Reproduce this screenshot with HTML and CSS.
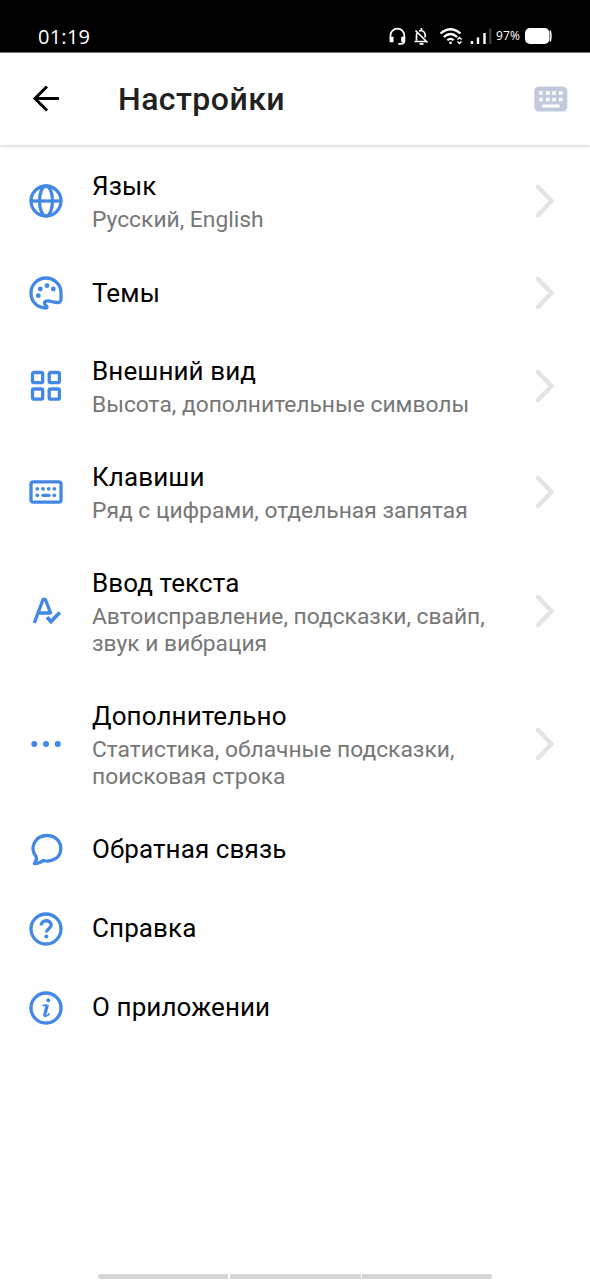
FILE: index.html
```html
<!DOCTYPE html>
<html lang="ru">
<head>
<meta charset="utf-8">
<title>Настройки</title>
<link rel="stylesheet" href="styles.css">
</head>
<body>
<svg class="defs" width="0" height="0"><symbol id="chevron" viewBox="0 0 20 34"><path d="M3 3 16.500 17 3 31" fill="none" stroke="currentColor" stroke-width="4.600" stroke-linecap="round" stroke-linejoin="round"/></symbol></svg>
<div class="screen">
  <div class="statusbar">
    <span class="clock">01:19</span>
    <svg class="status-icons" width="106" height="24" viewBox="0 0 106 24" fill="none" stroke="#fff" stroke-width="1.7">
      <path d="M2.500 15V11.500a6.900 6.900 0 0 1 13.800 0V17q0 2.800-3 2.800h-3"/>
      <path d="M2.500 13.500h2.200v4H2.500zM14.100 13.500h2.200v4h-2.200z" fill="#fff"/>
      <path d="M26.500 17.500h12M28.500 16.500v-5q0-2 1-3M31 7q5-1.500 6.200 3.500v3M33.400 4v2M27.500 6.500l12 12M31.500 19.800h4" stroke-width="1.700"/>
      <path d="M52.500 9.500q10-8.500 20 0M55.800 13q6.700-6 13.400 0M59.300 16.300q3.200-3 6.400 0" stroke-width="2.200"/>
      <circle cx="62.500" cy="18.800" r="1.400" fill="#fff" stroke="none"/>
      <path d="M69.500 15.500l2-2 2 2M69.500 17.500l2 2 2-2" stroke-width="1.500"/>
      <path d="M84 20v-3M90 20v-6.500M96.500 20V9" stroke-width="2.400"/>
      <path d="M102.200 20V4.500" stroke="#383838" stroke-width="2.600"/>
    </svg>
    <span class="percent">97%</span>
    <svg class="battery" width="28" height="16" viewBox="0 0 28 16"><rect width="24.500" height="16" rx="5" fill="#fff"/><path d="M25.300 2.500q1.500 5.500 0 11" stroke="#fff" stroke-width="1.500" fill="none"/></svg>
  </div>
  <header class="toolbar">
    <svg class="back" width="28" height="28" viewBox="0 0 28 28" fill="none" stroke="#000" stroke-width="3"><path d="M27 13.500H3M15 1.500 3 13.500l12 12"/></svg>
    <h1 class="heading">Настройки</h1>
    <svg class="keyboard" width="34" height="26" viewBox="0 0 34 26"><rect x=".3" y=".5" width="33" height="25" rx="4.500" fill="#c2c9dc"/><path d="M5.200 7h3.600M12 7h3.600M18.300 7h3.600M25 7h3.600M5.200 13.500h3.600M12 13.500h3.600M18.300 13.500h3.600M25 13.500h3.600" stroke="#fff" stroke-width="3.400"/><path d="M8.500 20h17" stroke="#fff" stroke-width="3"/></svg>
  </header>
  <main class="list">
    <div class="row two">
      <svg class="icon" viewBox="0 0 40 40"><circle cx="20" cy="20" r="15"/><ellipse cx="20" cy="20" rx="6.500" ry="15"/><path d="M5 20h30"/></svg>
      <div class="copy"><div class="title">Язык</div><div class="sub">Русский, English</div></div>
      <svg class="chevron"><use href="#chevron"/></svg>
    </div>
    <div class="row one">
      <svg class="icon" viewBox="0 0 40 40"><path d="M20 35C11 35 5 28.500 5 20a15 15 0 0 1 30 0v6q0 3.800-3.800 3.500-3-.200-6-1-5-1.500-6.500.500-.800 1.800 1.500 3.800Q22 35 20 35Z"/><g class="solid"><circle cx="14.300" cy="16" r="2.400"/><circle cx="21" cy="12.700" r="2.400"/><circle cx="27.300" cy="16" r="2.400"/><circle cx="12.300" cy="22.700" r="2.400"/></g></svg>
      <div class="copy"><div class="title">Темы</div></div>
      <svg class="chevron"><use href="#chevron"/></svg>
    </div>
    <div class="row two">
      <svg class="icon" viewBox="0 0 40 40"><rect x="6.500" y="6.500" width="10.200" height="10.200" rx="1.500"/><rect x="23.200" y="6.500" width="10.200" height="10.200" rx="1.500"/><rect x="6.500" y="23" width="10.200" height="10.200" rx="1.500"/><rect x="23.200" y="23" width="10.200" height="10.200" rx="1.500"/></svg>
      <div class="copy"><div class="title">Внешний вид</div><div class="sub">Высота, дополнительные символы</div></div>
      <svg class="chevron"><use href="#chevron"/></svg>
    </div>
    <div class="row two">
      <svg class="icon" viewBox="0 0 40 40"><rect x="5" y="9.800" width="30" height="20.400" rx="2.200"/><g class="solid"><circle cx="11.300" cy="16.800" r="1.900"/><circle cx="17" cy="16.800" r="1.900"/><circle cx="22.700" cy="16.800" r="1.900"/><circle cx="28.300" cy="16.800" r="1.900"/><circle cx="11.300" cy="23.300" r="1.900"/><circle cx="28.300" cy="23.300" r="1.900"/></g><path class="round" d="M17 23.300h6"/></svg>
      <div class="copy"><div class="title">Клавиши</div><div class="sub">Ряд с цифрами, отдельная запятая</div></div>
      <svg class="chevron"><use href="#chevron"/></svg>
    </div>
    <div class="row three">
      <svg class="icon" viewBox="0 0 40 40"><path d="M8.300 32 17 8.500h2.400L25 23M12.500 22h12"/><path class="check" d="M21 26.300l4 4.200 8.800-9"/></svg>
      <div class="copy"><div class="title">Ввод текста</div><div class="sub">Автоисправление, подсказки, свайп,<br>звук и вибрация</div></div>
      <svg class="chevron"><use href="#chevron"/></svg>
    </div>
    <div class="row three">
      <svg class="icon" viewBox="0 0 40 40"><g class="solid"><circle cx="8.300" cy="20" r="3"/><circle cx="20" cy="20" r="3"/><circle cx="31.700" cy="20" r="3"/></g></svg>
      <div class="copy"><div class="title">Дополнительно</div><div class="sub">Статистика, облачные подсказки,<br>поисковая строка</div></div>
      <svg class="chevron"><use href="#chevron"/></svg>
    </div>
    <div class="row one">
      <svg class="icon" viewBox="0 0 40 40"><path d="M10.200 26.800C3 18 9 5.500 21 5.500c8 0 13.800 5.800 13.800 12.900 0 9-8.500 14.500-17.800 12.100-2.500 2.200-5.200 3-8.600 3 1.800-2.200 2.400-4 1.800-6.700Z"/></svg>
      <div class="copy"><div class="title">Обратная связь</div></div>
    </div>
    <div class="row one">
      <svg class="icon" viewBox="0 0 40 40"><circle cx="20" cy="20" r="15"/><path d="M15.200 16.500c0-6.500 10-6 10-.500 0 3.200-4.700 3.800-4.700 7.500"/><circle class="solid" cx="20.300" cy="27.500" r="2"/></svg>
      <div class="copy"><div class="title">Справка</div></div>
    </div>
    <div class="row one">
      <svg class="icon" viewBox="0 0 40 40"><circle cx="20" cy="20" r="15"/><path class="thin" d="M16.500 17.400h4M23.500 25.500q-2 3-4.500 2.700"/><path d="M21.300 16.600 19 26q-.4 1.500.6 1.800"/><circle class="solid" cx="22.300" cy="12.200" r="2"/></svg>
      <div class="copy"><div class="title">О приложении</div></div>
    </div>
  </main>
  <div class="navhint"><span></span><span></span><span></span></div>
</div>
</body>
</html>
```
FILE: styles.css
```css
* { box-sizing: border-box; }
body { margin: 0; background: #fefefe; font-family: Roboto, sans-serif; }
.defs { display: block; }
.screen { width: 590px; height: 1280px; display: flex; flex-direction: column; overflow: hidden; }
.statusbar { height: 53px; flex: none; background: #000; border-bottom: 1px solid #777; color: #fff; display: flex; align-items: flex-start; padding: 24px 37px 0 38px; }
.clock { font: 20px/26px "Open Sans", sans-serif; letter-spacing: .25px; flex: 1; }
.status-icons { flex: none; }
.percent { font: 12px/24px "Open Sans", sans-serif; width: 25px; margin: 0 4px 0 2px; letter-spacing: .1px; }
.battery { margin-top: 4px; }
.toolbar { flex: none; height: 92px; background: #fff; display: flex; align-items: center; padding: 0 22px 0 32px; box-shadow: 0 1px 3px rgba(0,0,0,.2); }
.heading { flex: 1; margin: 0 0 0 58px; font-size: 32px; line-height: 38px; font-weight: 500; letter-spacing: .45px; color: #212121; }
.list { padding-top: 3px; }
.row { display: flex; align-items: center; padding: 0 35px 0 26px; }
.one { height: 78.800px; }
.one .copy { padding-bottom: 1px; }
.two { height: 106px; }
.three { height: 132.900px; }
.icon { flex: none; width: 40px; height: 40px; margin-right: 26px; fill: none; stroke: #4388e5; stroke-width: 3.300; stroke-linejoin: round; }
.solid { fill: #4388e5; stroke: none; }
.round { stroke-linecap: round; }
.check { stroke-width: 3.800; stroke-linejoin: miter; }
.thin { stroke-width: 1.700; }
.copy { flex: 1; white-space: nowrap; }
.title { font-size: 26px; line-height: 32px; letter-spacing: .1px; color: #000; }
.sub { font-size: 22.800px; line-height: 27px; margin-top: 4px; color: #777; }
.two .copy, .three .copy { padding-top: 1px; }
.chevron { flex: none; width: 20px; height: 34px; color: #e4e4e4; }
.navhint { margin-top: auto; padding: 0 98px 1px; display: grid; grid-template-columns: 130px 131px 130px; gap: 1.500px; }
.navhint span { height: 5px; background: #d5d5d5; }
.navhint span:first-child { border-radius: 3px 0 0 3px; }
.navhint span:last-child { border-radius: 0 3px 3px 0; }
```
